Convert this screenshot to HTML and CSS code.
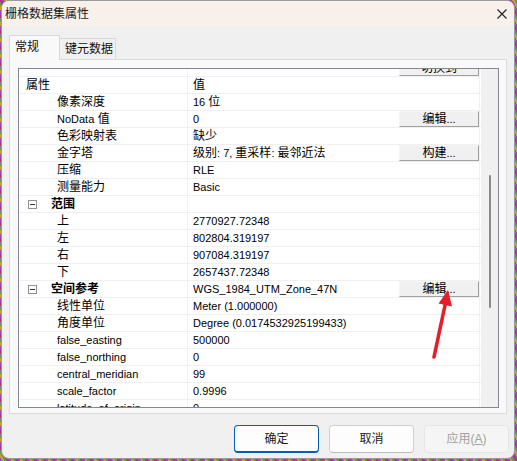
FILE: index.html
```html
<!DOCTYPE html>
<html>
<head>
<meta charset="utf-8">
<link rel="stylesheet" href="styles.css">
</head>
<body>
<div class="window">
  <div class="titlebar">
    <span class="title">栅格数据集属性</span>
    <svg class="close" width="10" height="10" viewBox="0 0 10 10"><path d="M0.5 0.5 L9.5 9.5 M9.5 0.5 L0.5 9.5" stroke="#1f1f1f" stroke-width="1.1" fill="none"/></svg>
  </div>
  <div class="client">
    <div class="tabs">
      <div class="tab active">常规</div>
      <div class="tab">键元数据</div>
    </div>
    <div class="panel">
      <div class="grid">
        <div class="list">
          <div class="rows">
            <div class="row"><div class="k"></div><div class="v"><span class="vt"></span><span class="cellbtn">切换到</span></div></div>
            <div class="row head"><div class="k hk">属性</div><div class="v"><span class="vt z">值</span></div></div>
            <div class="row"><div class="k ck">像素深度</div><div class="v"><span class="vt">16 <span class="z">位</span></span></div></div>
            <div class="row"><div class="k ck"><span class="en">NoData</span> 值</div><div class="v"><span class="vt">0</span><span class="cellbtn">编辑<span class="en">...</span></span></div></div>
            <div class="row"><div class="k ck">色彩映射表</div><div class="v"><span class="vt z">缺少</span></div></div>
            <div class="row"><div class="k ck">金字塔</div><div class="v"><span class="vt"><span class="z">级别</span>: 7, <span class="z">重采样</span>: <span class="z">最邻近法</span></span><span class="cellbtn">构建<span class="en">...</span></span></div></div>
            <div class="row"><div class="k ck">压缩</div><div class="v"><span class="vt">RLE</span></div></div>
            <div class="row"><div class="k ck">测量能力</div><div class="v"><span class="vt">Basic</span></div></div>
            <div class="row"><div class="k cat"><span class="box"></span><b>范围</b></div><div class="v"></div></div>
            <div class="row"><div class="k ck">上</div><div class="v"><span class="vt">2770927.72348</span></div></div>
            <div class="row"><div class="k ck">左</div><div class="v"><span class="vt">802804.319197</span></div></div>
            <div class="row"><div class="k ck">右</div><div class="v"><span class="vt">907084.319197</span></div></div>
            <div class="row"><div class="k ck">下</div><div class="v"><span class="vt">2657437.72348</span></div></div>
            <div class="row"><div class="k cat"><span class="box"></span><b>空间参考</b></div><div class="v"><span class="vt">WGS_1984_UTM_Zone_47N</span><span class="cellbtn">编辑<span class="en">...</span></span></div></div>
            <div class="row"><div class="k ck">线性单位</div><div class="v"><span class="vt">Meter (1.000000)</span></div></div>
            <div class="row"><div class="k ck">角度单位</div><div class="v"><span class="vt">Degree (0.0174532925199433)</span></div></div>
            <div class="row"><div class="k ck en">false_easting</div><div class="v"><span class="vt">500000</span></div></div>
            <div class="row"><div class="k ck en">false_northing</div><div class="v"><span class="vt">0</span></div></div>
            <div class="row"><div class="k ck en">central_meridian</div><div class="v"><span class="vt">99</span></div></div>
            <div class="row"><div class="k ck en">scale_factor</div><div class="v"><span class="vt">0.9996</span></div></div>
            <div class="row"><div class="k ck en">latitude_of_origin</div><div class="v"><span class="vt">0</span></div></div>
          </div>
        </div>
        <div class="vscroll"><div class="thumb"></div></div>
      </div>
    </div>
    <div class="footer">
      <button class="btn primary">确定</button>
      <button class="btn">取消</button>
      <button class="btn disabled">应用(<u>A</u>)</button>
    </div>
  </div>
</div>
<svg class="arrow" width="517" height="461" viewBox="0 0 517 461">
  <line x1="434" y1="357" x2="445.5" y2="303" stroke="#e41e2b" stroke-width="3.6" stroke-linecap="round"/>
  <polygon points="448,290 452,306.5 438.5,303.5" fill="#e41e2b"/>
</svg>
</body>
</html>
```
FILE: styles.css
```css
html, body {
  margin: 0;
  padding: 0;
}
body {
  width: 517px;
  height: 461px;
  overflow: hidden;
  position: relative;
  background: repeating-linear-gradient(60deg, #9a48c0 0 2px, #c8a030 2px 4px, #6a9850 4px 6px, #b0308a 6px 8px);
  font-family: "Liberation Sans", "Noto Sans CJK SC", sans-serif;
  color: #000;
}
.window {
  box-sizing: border-box;
  width: 514px;
  height: 459px;
  margin-left: 1px;
  border: 1px solid #9a9a9a;
  border-radius: 8px;
  overflow: hidden;
  background: #f0f0f0;
  display: flex;
  flex-direction: column;
}
.titlebar {
  height: 25px;
  flex: none;
  background: #f8f0eb;
  display: flex;
  align-items: center;
  padding-left: 3px;
}
.title {
  font-size: 12px;
  line-height: 16px;
  color: #1b1b1b;
}
.close {
  margin-left: auto;
  margin-right: 7px;
}
.client {
  flex: 1;
  display: flex;
  flex-direction: column;
}
.tabs {
  display: flex;
  align-items: flex-end;
  margin-top: 9px;
  padding-left: 7px;
  height: 24px;
}
.tab {
  box-sizing: border-box;
  font-size: 12px;
  line-height: 16px;
  border: 1px solid #d9d9d9;
  border-bottom: none;
  background: #f0f0f0;
  width: 57px;
  height: 21px;
  margin-left: -1px;
  padding: 2px 0 0 5px;
  color: #111;
}
.tab.active {
  width: 51px;
  height: 25px;
  margin-left: 0;
  margin-bottom: -1px;
  background: #f9f9f9;
  position: relative;
  z-index: 1;
  padding: 3px 0 0 5px;
}
.panel {
  box-sizing: border-box;
  width: 498px;
  height: 355px;
  margin-left: 7px;
  border: 1px solid #dcdcdc;
  background: #f9f9f9;
  padding: 8px 0 0 8px;
}
.grid {
  box-sizing: border-box;
  width: 481px;
  height: 340px;
  border: 1px solid #828790;
  display: flex;
}
.list {
  width: 462px;
  background: #fff;
  overflow: hidden;
}
.rows {
  margin-top: -9px;
}
.row {
  display: flex;
  height: 16px;
  overflow: hidden;
  border-bottom: 1px solid #f0f0f0;
  font-size: 11px;
  line-height: 17px;
}
.k {
  box-sizing: border-box;
  width: 169px;
  flex: none;
  border-right: 1px solid #f0f0f0;
  font-size: 12px;
  white-space: nowrap;
  overflow: hidden;
}
.hk {
  padding-left: 7px;
}
.ck {
  padding-left: 38px;
}
.cat {
  display: flex;
  align-items: center;
  padding-left: 9px;
}
.cat b {
  margin-left: 14px;
  font-weight: bold;
}
.box {
  box-sizing: border-box;
  width: 9px;
  height: 9px;
  border: 1px solid #919191;
  position: relative;
  flex: none;
  background: #fff;
}
.box::after {
  content: "";
  position: absolute;
  left: 1px;
  top: 3px;
  width: 5px;
  height: 1px;
  background: #333;
}
.v {
  box-sizing: border-box;
  width: 292px;
  flex: none;
  border-right: 1px solid #f0f0f0;
  display: flex;
  padding-left: 5px;
  white-space: nowrap;
}
.vt {
  flex: 1;
  overflow: hidden;
}
.z {
  font-size: 12px;
}
.en {
  font-size: 11px;
}
.cellbtn {
  box-sizing: border-box;
  width: 80px;
  height: 16px;
  flex: none;
  background: #f0f0f0;
  border-top: 1px solid #f4f4f4;
  border-left: 1px solid #f4f4f4;
  border-right: 1px solid #a0a0a0;
  border-bottom: 1px solid #a0a0a0;
  font-size: 12px;
  line-height: 14px;
  text-align: center;
  color: #000;
}
.vscroll {
  width: 17px;
  margin-left: 0;
  background: #f0f0f0;
  position: relative;
}
.thumb {
  position: absolute;
  left: 8px;
  top: 106px;
  width: 2px;
  height: 133px;
  background: #8a8a8a;
  border-radius: 1px;
}
.footer {
  display: flex;
  justify-content: flex-end;
  gap: 10px;
  margin-top: 11px;
  padding-right: 5px;
}
.btn {
  box-sizing: border-box;
  width: 85px;
  height: 28px;
  font-family: "Liberation Sans", "Noto Sans CJK SC", sans-serif;
  font-size: 12px;
  line-height: 16px;
  color: #1a1a1a;
  background: #fdfdfd;
  border: 1px solid #d0d0d0;
  border-bottom-color: #bcbcbc;
  border-radius: 4px;
  padding: 0;
}
.btn.primary {
  border: 1px solid #005fb8;
  border-bottom: 2px solid #005fb8;
}
.btn.disabled {
  background: #f5f5f5;
  border-color: #e5e5e5;
  color: #a0a0a0;
}
.arrow {
  position: absolute;
  left: 0;
  top: 0;
  pointer-events: none;
}
```
